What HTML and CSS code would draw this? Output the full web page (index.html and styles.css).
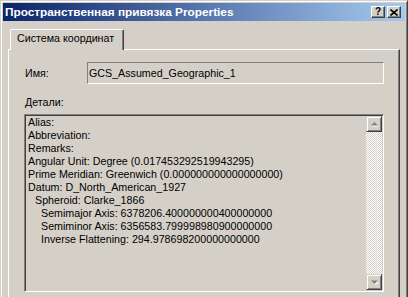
FILE: index.html
```html
<!DOCTYPE html>
<html>
<head>
<meta charset="utf-8">
<link rel="stylesheet" href="styles.css">
</head>
<body>
<div class="window">
  <div class="titlebar">
    <span class="title">Пространственная привязка Properties</span>
    <div class="tbtns">
      <div class="tbtn help">?</div>
      <div class="tbtn close">
        <svg width="8" height="7" viewBox="0 0 8 7"><path d="M0.5 0.5 L7.5 6.5 M7.5 0.5 L0.5 6.5" stroke="#000" stroke-width="1.6"/></svg>
      </div>
    </div>
  </div>
  <div class="content">
    <div class="tabs">
      <div class="tab">Система координат</div>
    </div>
    <div class="panel">
      <div class="namerow">
        <span class="lbl">Имя:</span>
        <div class="field">GCS_Assumed_Geographic_1</div>
      </div>
      <div class="dlabel">Детали:</div>
      <div class="details">
        <div class="dtext">
          <div>Alias:</div>
          <div>Abbreviation:</div>
          <div>Remarks:</div>
          <div>Angular Unit: Degree (0.017453292519943295)</div>
          <div>Prime Meridian: Greenwich (0.000000000000000000)</div>
          <div>Datum: D_North_American_1927</div>
          <div class="i1">Spheroid: Clarke_1866</div>
          <div class="i2">Semimajor Axis: 6378206.400000000400000000</div>
          <div class="i2">Semiminor Axis: 6356583.799998980900000000</div>
          <div class="i2">Inverse Flattening: 294.978698200000000000</div>
        </div>
        <div class="sbar">
          <div class="sbtn"><svg width="7" height="5" viewBox="0 0 7 5"><path d="M4.5 1 L8 4.5 L1 4.5 Z" fill="#fff"/><path d="M3.5 0 L7 3.5 L0 3.5 Z" fill="#808080"/></svg></div>
          <div class="strack"></div>
          <div class="sbtn"><svg width="7" height="5" viewBox="0 0 7 5"><path d="M1 1.5 L8 1.5 L4.5 5 Z" fill="#fff"/><path d="M0 0.5 L7 0.5 L3.5 4 Z" fill="#808080"/></svg></div>
        </div>
      </div>
    </div>
  </div>
</div>
</body>
</html>
```
FILE: styles.css
```css
html, body {
  margin: 0;
  padding: 0;
}
body {
  width: 408px;
  height: 297px;
  overflow: hidden;
  background: #d4d0c8;
  font-family: "Liberation Sans", Arial, sans-serif;
  font-size: 10.7px;
  line-height: 13px;
  color: #000;
}
.window {
  box-sizing: border-box;
  width: 408px;
  height: 297px;
  background: #d4d0c8;
  border: 1px solid;
  border-bottom: 0;
  border-color: #d4d0c8 #404040 #404040 #d4d0c8;
  box-shadow: inset 1px 1px #fff, inset -1px 0 #808080;
  padding: 2px 2px 0 2px;
  display: flex;
  flex-direction: column;
}
.titlebar {
  height: 18px;
  flex: none;
  display: flex;
  align-items: center;
  justify-content: space-between;
  background: linear-gradient(to right, #0a246a, #a6caf0);
  padding-left: 2px;
}
.title {
  color: #fff;
  font-weight: bold;
  font-size: 11.8px;
}
.tbtns {
  display: flex;
  gap: 2px;
  margin-right: 4px;
}
.tbtn {
  box-sizing: border-box;
  width: 14px;
  height: 12px;
  background: #d4d0c8;
  border: 1px solid;
  border-color: #fff #404040 #404040 #fff;
  box-shadow: inset -1px -1px #808080;
  display: flex;
  align-items: center;
  justify-content: center;
  font-weight: bold;
  font-size: 10px;
  line-height: 10px;
}
.content {
  flex: 1;
  min-height: 0;
  display: flex;
  flex-direction: column;
  padding: 8px 5px 0 5px;
}
.tabs {
  display: flex;
  height: 20px;
  flex: none;
  padding-left: 2px;
}
.tab {
  box-sizing: border-box;
  width: 114px;
  height: 21px;
  margin-bottom: -1px;
  position: relative;
  z-index: 1;
  background: #d4d0c8;
  border-top: 1px solid #fff;
  border-left: 1px solid #fff;
  border-right: 1px solid #404040;
  box-shadow: inset -1px 0 #808080;
  border-radius: 2px 2px 0 0;
  padding: 2px 0 0 6px;
}
.panel {
  flex: 1;
  min-height: 0;
  border-top: 1px solid #fff;
  border-left: 1px solid #fff;
  border-right: 1px solid #404040;
  box-shadow: inset -1px 0 #808080;
  padding: 12px 15px 0 16px;
  display: flex;
  flex-direction: column;
}
.namerow {
  display: flex;
  align-items: center;
}
.lbl {
  width: 62px;
}
.field {
  box-sizing: border-box;
  flex: 1;
  height: 22px;
  border: 1px solid;
  border-color: #808080 #fff #fff #808080;
  padding-left: 1px;
  display: flex;
  align-items: center;
}
.dlabel {
  margin-top: 12px;
}
.details {
  box-sizing: border-box;
  margin: 5px 0 0 -1px;
  height: 178px;
  flex: none;
  border: 1px solid;
  border-color: #808080 #fff #fff #808080;
  box-shadow: inset 1px 1px #404040, inset -1px -1px #d4d0c8;
  padding: 1px;
  display: flex;
}
.dtext {
  flex: 1;
  padding-left: 2px;
  white-space: nowrap;
  overflow: hidden;
}
.i1 { padding-left: 7px; }
.i2 { padding-left: 13px; }
.sbar {
  width: 16px;
  display: flex;
  flex-direction: column;
}
.sbtn {
  box-sizing: border-box;
  width: 16px;
  height: 16px;
  background: #d4d0c8;
  border: 1px solid;
  border-color: #d4d0c8 #404040 #404040 #d4d0c8;
  box-shadow: inset 1px 1px #fff, inset -1px -1px #808080;
  display: flex;
  align-items: center;
  justify-content: center;
}
.strack {
  flex: 1;
  background-color: #d4d0c8;
  background-image: conic-gradient(#fff 25%, #d4d0c8 0 50%, #fff 0 75%, #d4d0c8 0);
  background-size: 2px 2px;
}
```
